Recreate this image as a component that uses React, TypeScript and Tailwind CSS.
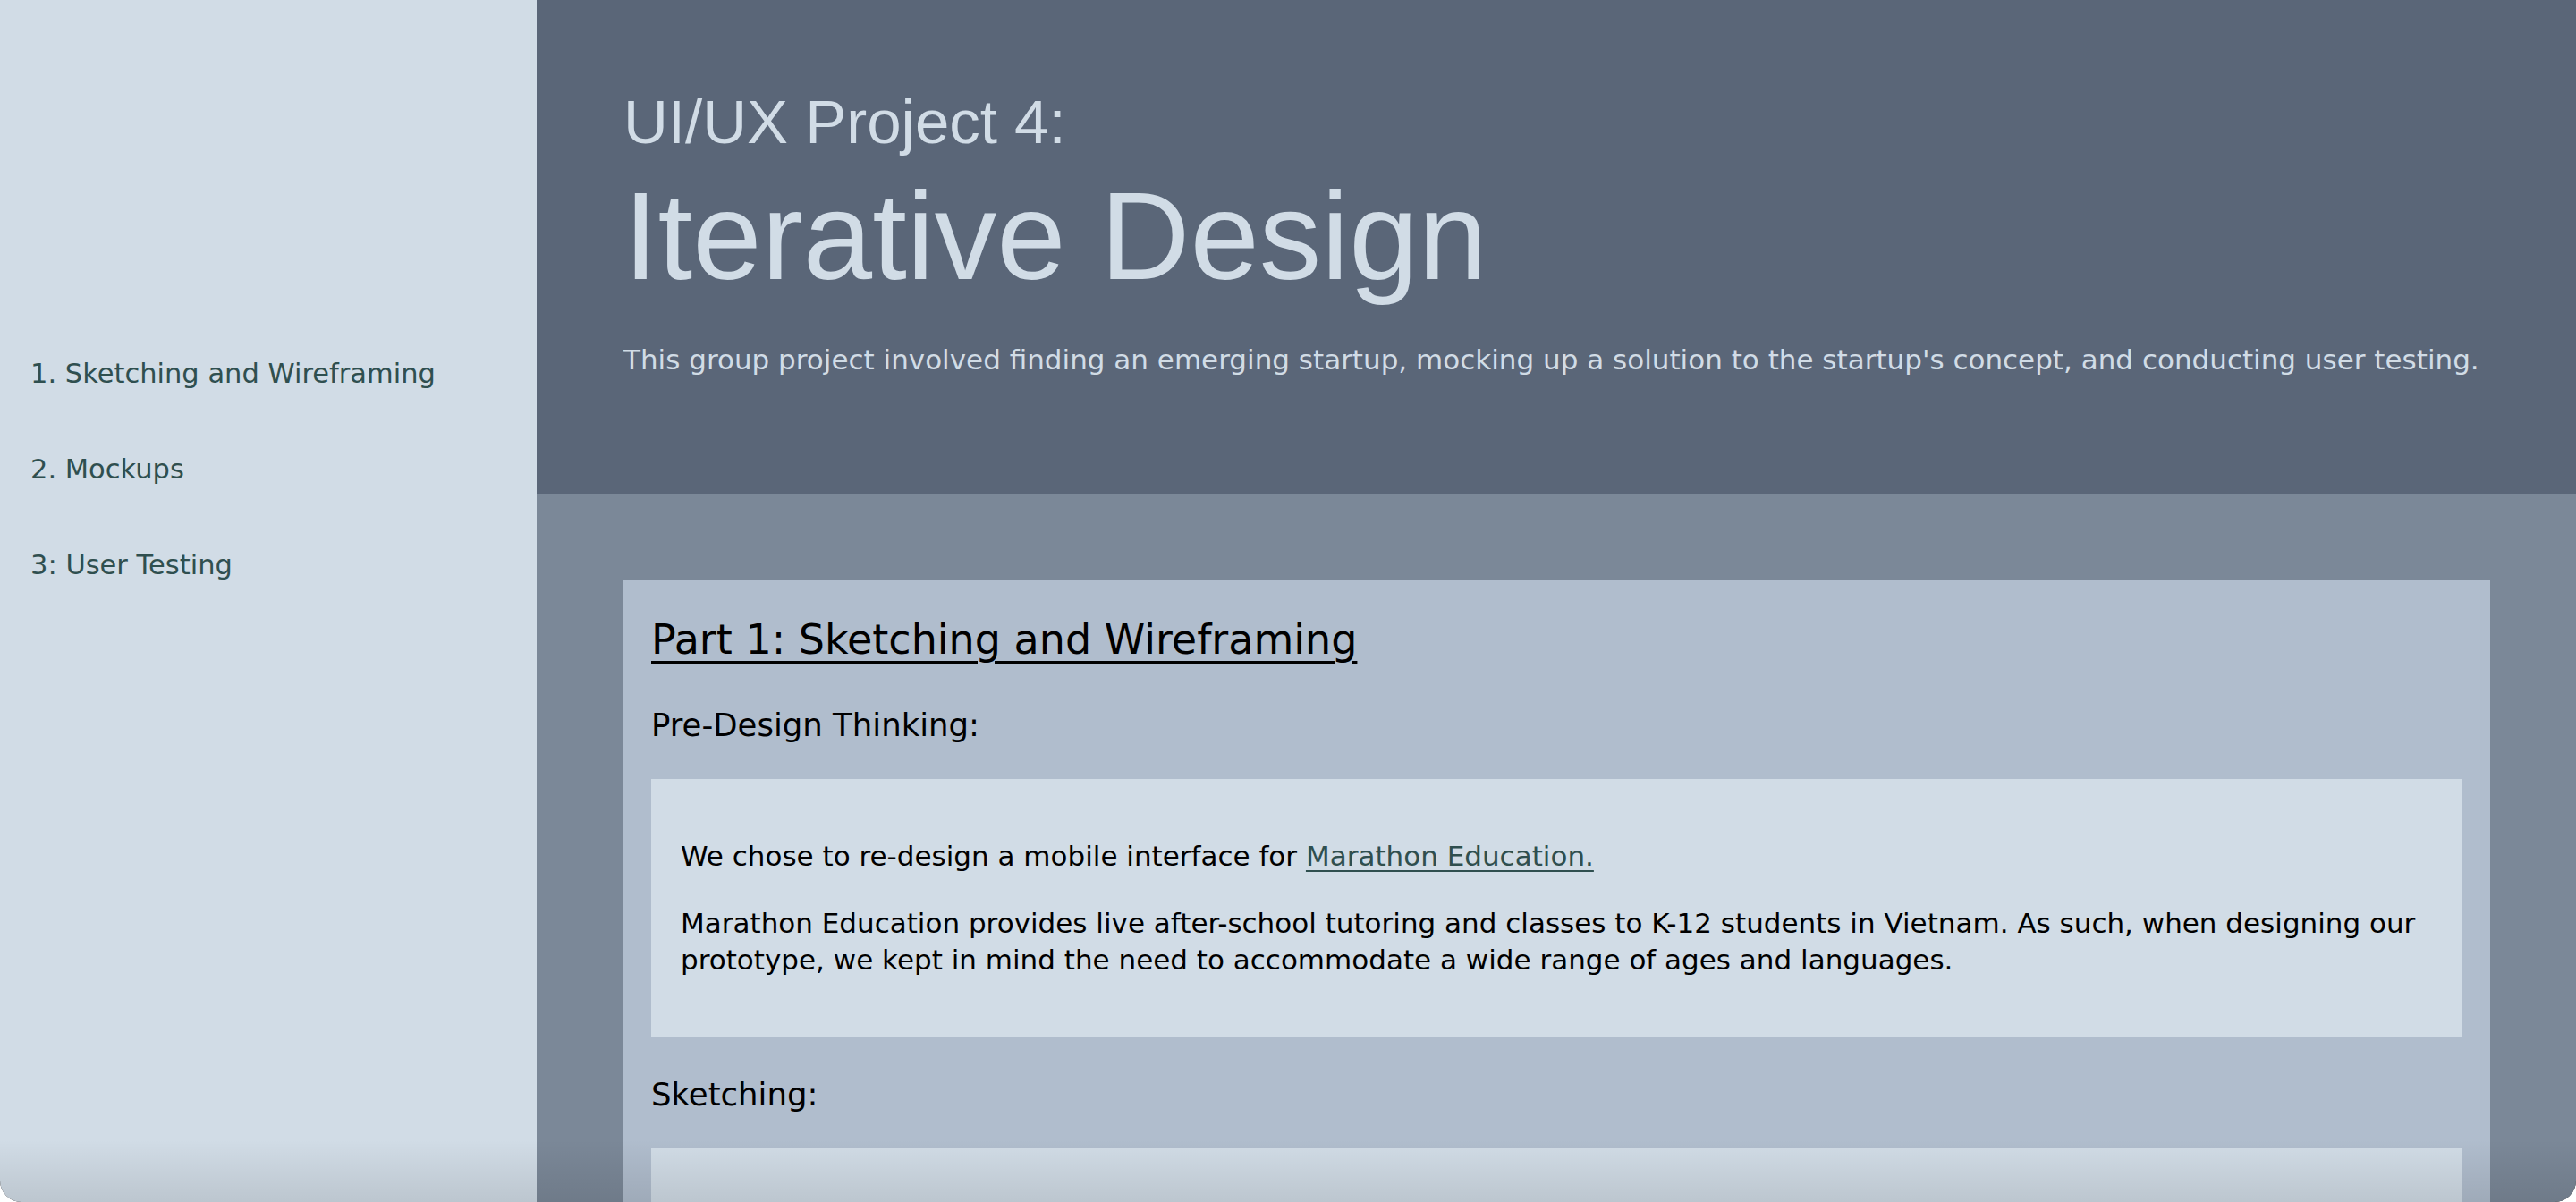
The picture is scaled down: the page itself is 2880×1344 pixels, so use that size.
const NAV = ["1. Sketching and Wireframing", "2. Mockups", "3: User Testing"];

const body = { fontFamily: '"DejaVu Sans", "Lucida Grande", sans-serif' };
const display = { fontFamily: '"Liberation Sans", Arial, Helvetica, sans-serif' };

export default function App() {
  return (
    <div className="relative h-[1344px] w-[2880px] overflow-hidden rounded-b-[24px] bg-[#1c1c1c]">
      <div className="flex h-full w-full" style={body}>
        {/* sidebar */}
        <aside className="w-[600px] shrink-0 bg-[#d1dce6] pl-[34px] pt-[402px]">
          <ul className="flex flex-col gap-[75px]">
            {NAV.map((item) => (
              <li key={item} className="text-[30.5px] leading-[32px] text-[#2f4f4f]">
                {item}
              </li>
            ))}
          </ul>
        </aside>

        <main className="flex min-w-0 flex-1 flex-col bg-[#7b8898]">
          {/* header */}
          <header className="h-[552px] shrink-0 bg-[#5a6678] pl-[97px] pt-[102px] text-[#d1dce6]">
            <h3 className="text-[69px] leading-[69px]" style={display}>
              UI/UX Project 4:
            </h3>
            <h1 className="mt-[23px] text-[139px] leading-[140px]" style={display}>
              Iterative Design
            </h1>
            <p className="mt-[53px] text-[31px] leading-[31px]">
              This group project involved finding an emerging startup, mocking up a solution to the startup's
              concept, and conducting user testing.
            </p>
          </header>

          {/* content */}
          <section className="px-[96px] pt-[96px]">
            <div className="bg-[#b0bdcd] px-[32px] pt-[43px] pb-[40px] text-black">
              <h2 className="text-[46px] leading-[48px] underline decoration-[3px] underline-offset-[8px]">
                Part 1: Sketching and Wireframing
              </h2>
              <h3 className="mt-[53px] text-[35.5px] leading-[37px]">Pre-Design Thinking:</h3>
              <div className="mt-[42px] bg-[#d1dce6] px-[33px] py-[66px] text-[31px] leading-[41px]">
                <p>
                  We chose to re-design a mobile interface for{" "}
                  <a href="#" className="text-[#2f4f4f] underline decoration-[2px] underline-offset-[5px]">
                    Marathon Education.
                  </a>
                </p>
                <p className="mt-[34px]">
                  Marathon Education provides live after-school tutoring and classes to K-12 students in Vietnam. As
                  such, when designing our prototype, we kept in mind the need to accommodate a wide range of ages
                  and languages.
                </p>
              </div>
              <h3 className="mt-[45px] text-[35.5px] leading-[37px]">Sketching:</h3>
              <div className="mt-[42px] h-[300px] bg-[#d1dce6]" />
            </div>
          </section>
        </main>
      </div>

      {/* bottom shade of the window */}
      <div className="pointer-events-none absolute inset-x-0 bottom-0 h-[70px] bg-gradient-to-b from-transparent to-black/10" />
    </div>
  );
}
